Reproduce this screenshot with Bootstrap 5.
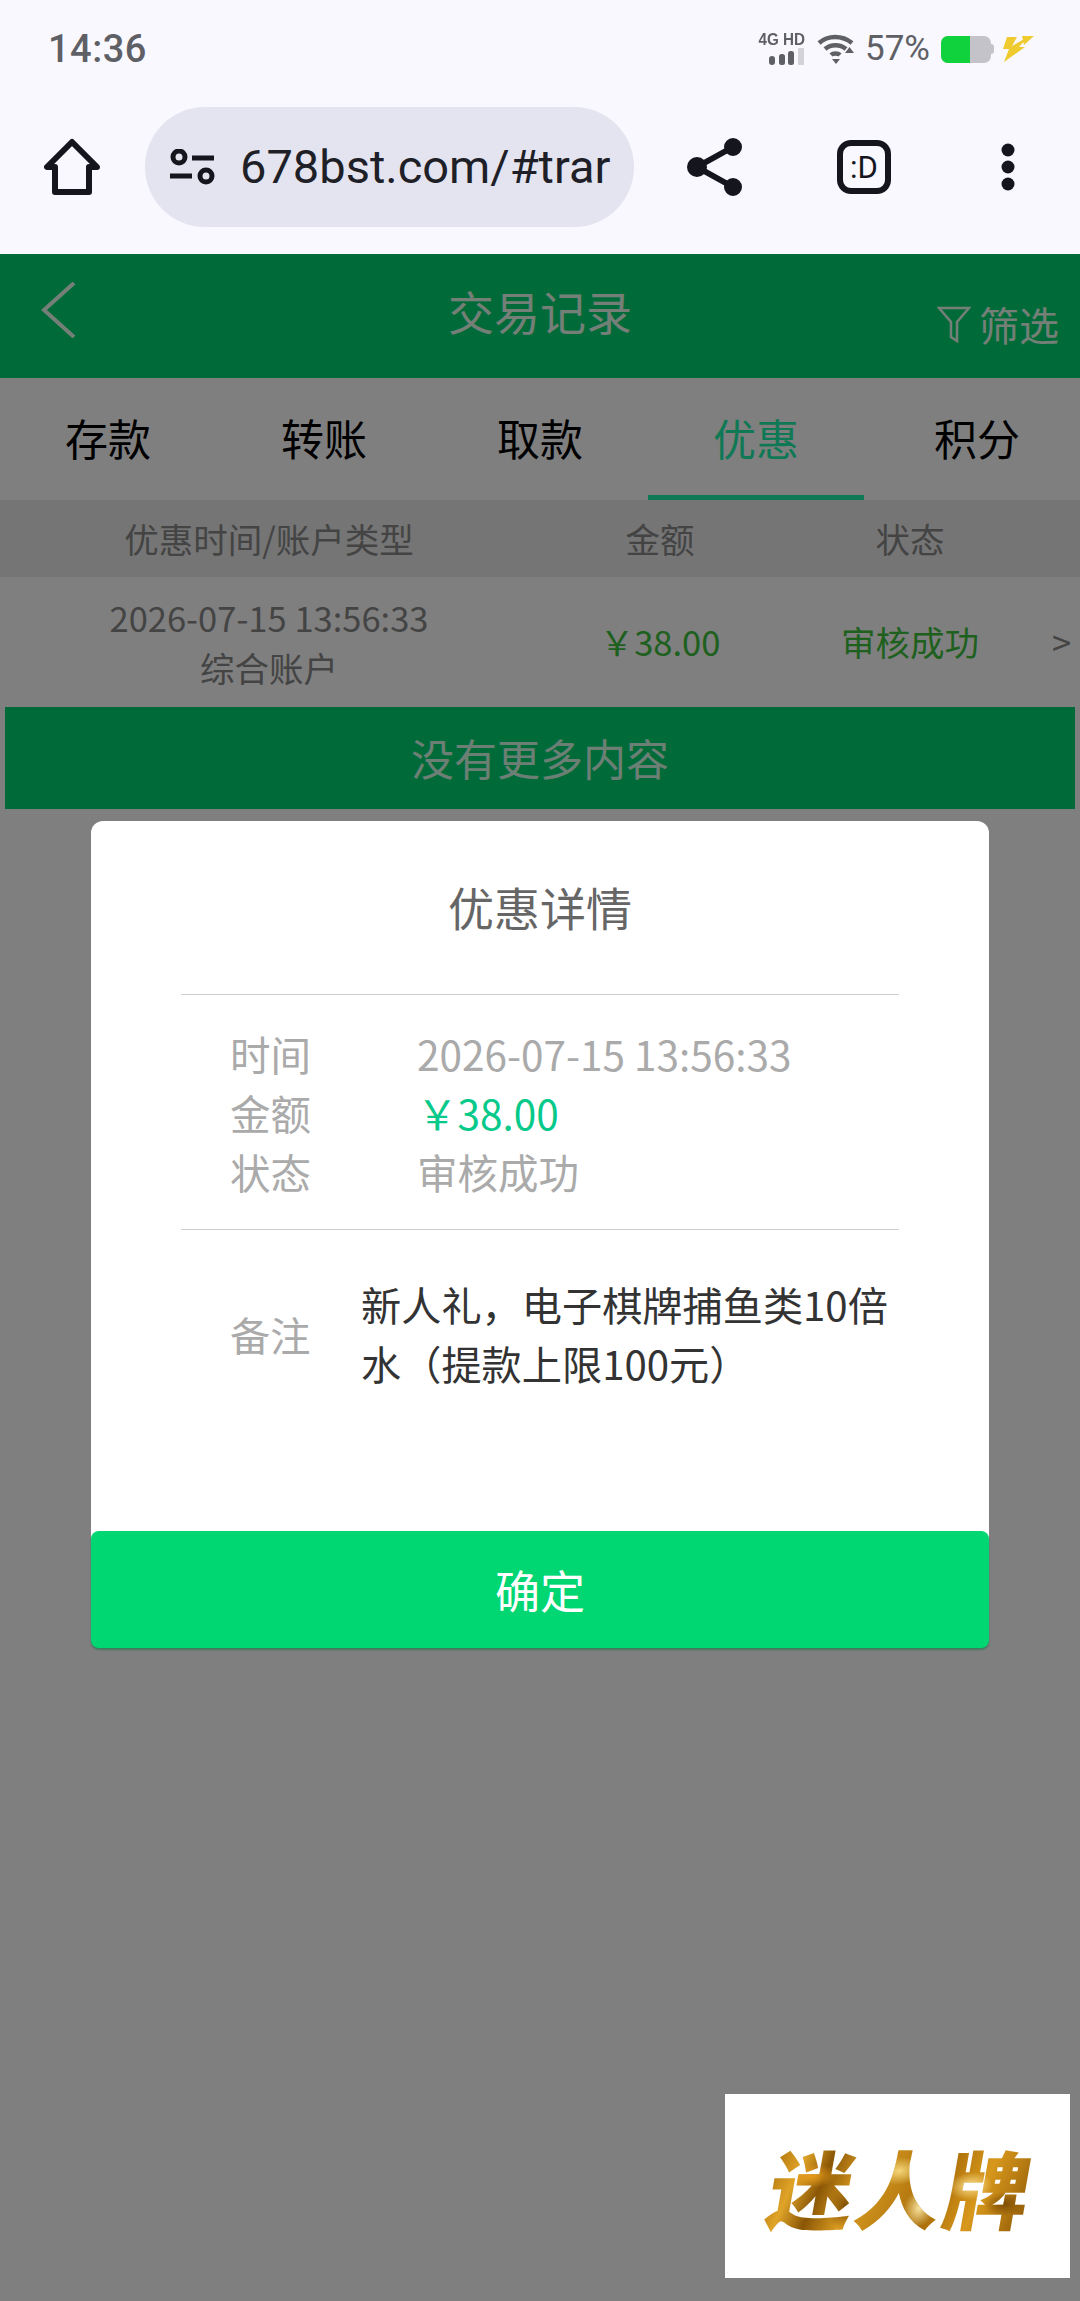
<!DOCTYPE html>
<html lang="zh-CN">
<head>
    <meta charset="UTF-8">
    <meta name="viewport" content="width=device-width, initial-scale=1.0">
    <title>交易记录</title>
    <link href="https://cdn.jsdelivr.net/npm/bootstrap@5.3.0/dist/css/bootstrap.min.css" rel="stylesheet">
    <style>
        body {
            width: 1080px;
            height: 2301px;
            overflow: hidden;
            background-color: #fff;
            font-family: "Noto Sans CJK SC", "Noto Sans", sans-serif;
        }
        .chrome-area { background-color: #f8f8fe; height: 254px; font-family: Roboto, Inter, sans-serif; }
        .status-line { height: 98px; padding: 0 46px 0 48px; color: #5f5f66; }
        .clock { font-size: 38px; font-weight: 500; letter-spacing: 0.5px; }
        .net-group { margin-right: 12px; }
        .net-text { font-size: 16px; line-height: 16px; font-weight: 700; color: #5f5f66; width: 50px; text-align: right; font-family: "Liberation Sans", sans-serif; transform: scaleX(.95); transform-origin: right; }
        .percent { font-size: 35px; margin: 0 11px 0 10px; }
        .battery { width: 50px; height: 27px; border-radius: 7px; overflow: hidden; background-color: #c3c3c9; }
        .battery-fill { width: 29px; background-color: #0fd23c; }
        .battery-nub { width: 3px; height: 10px; border-radius: 0 3px 3px 0; background-color: #c3c3c9; }
        .bolt-icon { margin-left: 8px; }
        .browser-line { height: 154px; padding: 0 0 16px 44px; }
        .url-pill { width: 489px; height: 120px; margin: 0 52px 0 45px; padding-left: 25px; border-radius: 60px; background-color: #e4e4f0; }
        .url-text { font-size: 47px; line-height: 60px; color: #1f1f28; white-space: nowrap; margin-left: 24px; }
        .tabs-icon { margin-left: 93px; }
        .more-icon { margin-left: 107px; }
        .app-area { height: 2047px; }
        .top-head { height: 124px; background-color: #00d672; padding: 0 21px 0 40px; }
        .back-icon { margin-top: 28px; }
        .head-title { font-size: 46px; line-height: 60px; color: #e6ffef; left: 0; right: 0; top: 26px; }
        .filter-text { font-size: 40px; color: #e6ffef; margin-top: 40px; }
        .filter-icon { margin-right: 8px; }
        .tab-row { height: 122px; }
        .tab-item { width: 216px; font-size: 43px; line-height: 118px; color: #000; text-align: center; }
        .tab-on { color: #1ef0aa; border-bottom: 5px solid #1ef0aa; height: 122px; }
        .tab-end { padding-left: 10px; }
        .list-head { height: 77px; background-color: #eaeaea; font-size: 34.500px; line-height: 77px; color: #888; }
        .list-row { height: 129px; font-size: 34.500px; color: #888; }
        .cell-time { width: 538px; text-align: center; }
        .cell-lines { line-height: 50px; }
        .cell-money { width: 244px; text-align: center; }
        .cell-state { width: 256px; text-align: center; }
        .cell-go { width: 42px; padding-left: 14px; }
        .ok-text { color: #3cc03c; }
        .no-more { height: 102px; margin: 1px 5px 0; background-color: #00d672; color: #d8ffe9; font-size: 43px; line-height: 100px; text-align: center; }
        .dim-layer { top: 0; left: 0; right: 0; bottom: 0; padding: 567px 91px 0; background-color: rgba(0, 0, 0, .5); }
        .detail-box { height: 827px; border-radius: 12px; background-color: #fff; border: 0; }
        .detail-title { font-size: 46px; line-height: 60px; color: #666; padding-top: 55px; height: 173px; text-align: center; }
        .detail-inner { margin: 0 90px; }
        .detail-block { border-top: 1px solid #ccc; padding: 29px 0 20px; height: 235px; font-size: 40.500px; line-height: 59px; color: #aaa; }
        .label-cell { width: 236px; padding-left: 49px; flex: none; }
        .money-text { color: #06c98a; }
        .note-block { border-top: 1px solid #ccc; padding-top: 44px; font-size: 40.200px; line-height: 59px; color: #aaa; }
        .note-label { width: 188px; padding-left: 49px; flex: none; }
        .note-text { color: #333; margin-left: -8px; width: 545px; }
        .ok-btn { left: 0; right: 0; bottom: 0; height: 117px; border-radius: 8px; border: 0; background-color: #00d672; color: #fff; font-size: 45px; box-shadow: 0 2px 2px rgba(0, 120, 60, .5); }
        .ok-btn:hover { background-color: #00d672; color: #fff; }
        .logo-box { right: 10px; bottom: 23px; width: 345px; height: 184px; padding-left: 10px; background-color: #fff; }
        .logo-text { font-size: 85px; line-height: 100px; font-weight: 900; letter-spacing: 3px; white-space: nowrap; transform: skewX(-10deg);
            color: transparent;
            background:
                radial-gradient(ellipse 26px 12px at 15% 40%, #e89c1c, transparent),
                radial-gradient(ellipse 18px 22px at 30% 70%, #7c4c06, transparent),
                radial-gradient(ellipse 22px 14px at 48% 35%, #f4d67a, transparent),
                radial-gradient(ellipse 16px 20px at 58% 72%, #f8e4a0, transparent),
                radial-gradient(ellipse 22px 14px at 76% 50%, #fbe08e, transparent),
                radial-gradient(ellipse 20px 12px at 90% 68%, #7c4c06, transparent),
                linear-gradient(105deg, #a86c08 0%, #e0a428 12%, #8a5606 22%, #d89a20 34%, #c08416 48%, #a86c08 62%, #d8981c 78%, #b87c12 88%, #8a5606 100%);
            -webkit-background-clip: text;
            background-clip: text; }
    </style>
</head>
<body>
    <!-- Phone status bar and browser toolbar -->
    <div class="chrome-area">
        <div class="status-line d-flex align-items-center justify-content-between">
            <div class="clock">14:36</div>
            <div class="d-flex align-items-center">
                <div class="net-group d-flex flex-column align-items-end">
                    <div class="net-text">4G HD</div>
                    <svg width="48" height="18" viewBox="0 0 48 18">
                        <rect x="12" y="8" width="6" height="9" rx="3" fill="#5f5f66"/>
                        <rect x="22" y="6" width="6" height="11" rx="2.500" fill="#5f5f66"/>
                        <rect x="31" y="3" width="6" height="14" rx="2.500" fill="#5f5f66"/>
                        <rect x="41" y="0" width="6" height="17" rx="1" fill="#d2d2d8"/>
                    </svg>
                </div>
                <svg width="38" height="30" viewBox="0 0 38 30" fill="none" stroke="#5f5f66" stroke-width="4.500">
                    <path d="M2 9C11 1 25 1 35 9"/>
                    <path d="M8 15C14 10 23 10 29 15"/>
                    <path d="M15 25H23L19 30Z" fill="#5f5f66" stroke="none"/>
                    <path d="M14 21C16 19 21 19 23 21"/>
                    <path d="M28 19H37L32.500 13Z" fill="#5f5f66" stroke="none"/>
                </svg>
                <div class="percent">57%</div>
                <div class="battery d-flex">
                    <div class="battery-fill"></div>
                </div>
                <div class="battery-nub"></div>
                <svg class="bolt-icon" width="32" height="28" viewBox="0 0 32 28">
                    <path d="M5 2H15L10 11L27 1L17 12H23L2 27L7 14H1Z" fill="#efcb30"/>
                    <path d="M20 1H32L22 10Z" fill="#efcb30"/>
                </svg>
            </div>
        </div>
        <div class="browser-line d-flex align-items-center">
            <svg width="56" height="58" viewBox="0 0 56 58" fill="none" stroke="#15151d" stroke-width="6" stroke-linejoin="round">
                <path d="M28 4L3 29H11V54H45V29H53Z"/>
            </svg>
            <div class="url-pill d-flex align-items-center">
                <svg class="flex-shrink-0" width="46" height="36" viewBox="0 0 46 36" fill="none" stroke="#15151d" stroke-width="5">
                    <circle cx="9" cy="8" r="6"/>
                    <path d="M22 9H44"/>
                    <path d="M0 27H22"/>
                    <circle cx="36" cy="27" r="6"/>
                </svg>
                <div class="url-text">678bst.com/#trar</div>
            </div>
            <svg width="58" height="62" viewBox="0 0 58 62" fill="#15151d" stroke="#15151d" stroke-width="6">
                <path d="M47 11L11 31L47 51" fill="none"/>
                <circle cx="47" cy="11" r="6"/>
                <circle cx="11" cy="31" r="7"/>
                <circle cx="47" cy="51" r="6"/>
            </svg>
            <svg class="tabs-icon" width="54" height="54" viewBox="0 0 54 54">
                <rect x="3" y="3" width="48" height="48" rx="11" fill="none" stroke="#15151d" stroke-width="6"/>
                <text x="27" y="38" text-anchor="middle" font-size="31" font-family="Roboto, sans-serif" fill="#15151d">:D</text>
            </svg>
            <svg class="more-icon" width="20" height="48" viewBox="0 0 20 48" fill="#15151d">
                <circle cx="10" cy="7" r="6.500"/>
                <circle cx="10" cy="24" r="6.500"/>
                <circle cx="10" cy="41" r="6.500"/>
            </svg>
        </div>
    </div>

    <div class="app-area position-relative">
        <!-- Page header -->
        <div class="top-head position-relative d-flex justify-content-between">
            <svg class="back-icon" width="38" height="56" viewBox="0 0 38 56" fill="none" stroke="#e6ffef" stroke-width="4">
                <path d="M34 1L4 28L34 55"/>
            </svg>
            <div class="head-title position-absolute text-center">交易记录</div>
            <div class="filter-text d-flex align-items-center align-self-start">
                <svg class="filter-icon" width="34" height="38" viewBox="0 0 34 38" fill="none" stroke="#e6ffef" stroke-width="2.500">
                    <path d="M2 3H32L20 17V36L14 32V17Z"/>
                </svg>
                筛选
            </div>
        </div>

        <!-- Tabs -->
        <div class="tab-row d-flex">
            <div class="tab-item">存款</div>
            <div class="tab-item">转账</div>
            <div class="tab-item">取款</div>
            <div class="tab-item tab-on">优惠</div>
            <div class="tab-item tab-end">积分</div>
        </div>

        <!-- Record list -->
        <div class="list-head d-flex">
            <div class="cell-time">优惠时间/账户类型</div>
            <div class="cell-money">金额</div>
            <div class="cell-state">状态</div>
        </div>
        <div class="list-row d-flex align-items-center">
            <div class="cell-time cell-lines">2026-07-15 13:56:33<br>综合账户</div>
            <div class="cell-money ok-text">￥38.00</div>
            <div class="cell-state ok-text">审核成功</div>
            <div class="cell-go">&gt;</div>
        </div>
        <div class="no-more">没有更多内容</div>

        <!-- Dialog over a dimmed page -->
        <div class="dim-layer position-absolute">
            <div class="detail-box card position-relative">
                <div class="detail-title">优惠详情</div>
                <div class="detail-inner">
                    <div class="detail-block">
                        <div class="d-flex"><div class="label-cell">时间</div><div>2026-07-15 13:56:33</div></div>
                        <div class="d-flex"><div class="label-cell">金额</div><div class="money-text">￥38.00</div></div>
                        <div class="d-flex"><div class="label-cell">状态</div><div>审核成功</div></div>
                    </div>
                    <div class="note-block d-flex align-items-center">
                        <div class="note-label">备注</div>
                        <div class="note-text">新人礼，电子棋牌捕鱼类10倍水（提款上限100元）</div>
                    </div>
                </div>
                <button class="ok-btn btn position-absolute" type="button">确定</button>
            </div>
            <div class="logo-box position-absolute d-flex align-items-center justify-content-center">
                <div class="logo-text">迷人牌</div>
            </div>
        </div>
    </div>

    <script src="https://cdn.jsdelivr.net/npm/bootstrap@5.3.0/dist/js/bootstrap.bundle.min.js"></script>
</body>
</html>
